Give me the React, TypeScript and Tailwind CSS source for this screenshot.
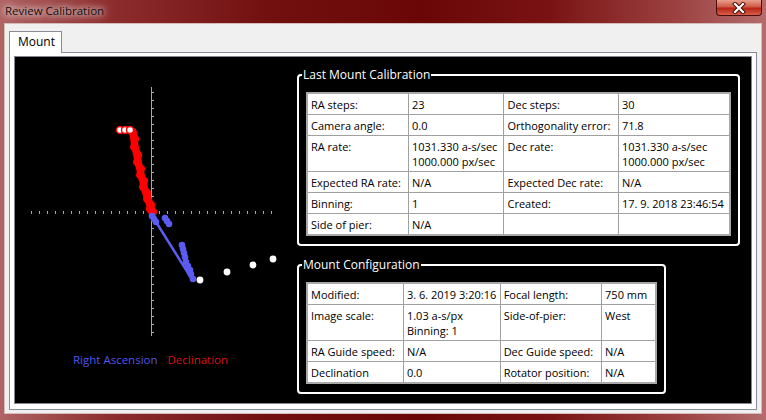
import React from 'react';

type Row = [string, string, string, string];

const calibration: Row[] = [
  ['RA steps:', '23', 'Dec steps:', '30'],
  ['Camera angle:', '0.0', 'Orthogonality error:', '71.8'],
  ['RA rate:', '1031.330 a-s/sec\n1000.000 px/sec', 'Dec rate:', '1031.330 a-s/sec\n1000.000 px/sec'],
  ['Expected RA rate:', 'N/A', 'Expected Dec rate:', 'N/A'],
  ['Binning:', '1', 'Created:', '17. 9. 2018 23:46:54'],
  ['Side of pier:', 'N/A', '', ''],
];

const configuration: Row[] = [
  ['Modified:', '3. 6. 2019 3:20:16', 'Focal length:', '750 mm'],
  ['Image scale:', '1.03 a-s/px\nBinning: 1', 'Side-of-pier:', 'West'],
  ['RA Guide speed:', 'N/A', 'Dec Guide speed:', 'N/A'],
  ['Declination', '0.0', 'Rotator position:', 'N/A'],
];

function InfoTable({ rows, cols }: { rows: Row[]; cols: string[] }) {
  return (
    <table className="border-collapse table-fixed bg-white text-black border-2 border-[#a8a8a8]">
      <colgroup>
        {cols.map((c, i) => (
          <col key={i} className={c} />
        ))}
      </colgroup>
      <tbody>
        {rows.map((row, r) => (
          <tr key={r}>
            {row.map((cell, i) => (
              <td
                key={i}
                className="border border-[#a0a0a0] align-top pl-[3px] pt-[3px] pb-[2px] leading-[15px] whitespace-nowrap overflow-hidden"
              >
                {cell.split('\n').map((line, j) => (
                  <div key={j}>{line}</div>
                ))}
              </td>
            ))}
          </tr>
        ))}
      </tbody>
    </table>
  );
}

function GroupBox({ title, width, children }: { title: string; width: string; children: React.ReactNode }) {
  return (
    <fieldset className={`border-2 border-white rounded-[4px] pt-[9px] px-[7px] pb-[8px] ${width}`}>
      <legend className="text-white leading-[16px] text-[12px] px-[1px] ml-[-4px]">{title}</legend>
      {children}
    </fieldset>
  );
}

// red (dec) trajectory and blue (ra) points, in chart coordinates
const redPath: [number, number][] = [
  [118, 75], [119, 82], [120, 90], [122, 98], [123, 105], [125, 112], [126, 118],
  [128, 124], [129, 130], [131, 136], [133, 142], [135, 148], [136, 152], [137, 155],
];
const bluePts: [number, number][] = [
  [137, 159], [139, 162], [141, 165],
  [150, 161], [152, 164], [154, 167],
  [167, 188], [168, 192], [169, 196], [170, 200],
  [171, 205], [173, 209], [175, 213], [176, 217], [178, 222],
];
const whitePts: [number, number][] = [[185, 223], [212, 215], [238, 208], [258, 202]];

function Chart() {
  const ticks = Array.from({ length: 31 }, (_, i) => i - 15);
  return (
    <svg width={282} height={295} className="block">
      <line x1={136.5} y1={30} x2={136.5} y2={279} stroke="#a8a8a8" strokeWidth={1} />
      {ticks.map((k) => (
        <line key={'v' + k} x1={137} y1={155.5 + k * 8} x2={139} y2={155.5 + k * 8} stroke="#a8a8a8" />
      ))}
      {ticks.map((k) => (
        <line key={'h' + k} x1={136.5 + k * 8} y1={154} x2={136.5 + k * 8} y2={157} stroke="#a8a8a8" />
      ))}
      <polyline
        points={redPath.map((p) => p.join(',')).join(' ')}
        fill="none"
        stroke="#ff0000"
        strokeWidth={7.5}
        strokeLinecap="round"
        strokeLinejoin="round"
      />
      {redPath.map(([x, y], i) => (
        <circle key={'r' + i} cx={x + (i % 2 ? 1 : -0.8)} cy={y} r={4.2} fill="#ff0000" />
      ))}
      {[105, 110, 115].map((x) => (
        <circle key={'o' + x} cx={x} cy={73} r={3.5} fill="#ffffff" stroke="#ff0000" strokeWidth={1.4} />
      ))}
      <line x1={136} y1={157} x2={178} y2={224} stroke="#5c5cf2" strokeWidth={2.5} />
      {bluePts.map(([x, y], i) => (
        <circle key={'b' + i} cx={x} cy={y} r={3.3} fill="#5c5cf2" />
      ))}
      {whitePts.map(([x, y], i) => (
        <circle key={'w' + i} cx={x} cy={y} r={3.4} fill="#ffffff" />
      ))}
    </svg>
  );
}

export default function App() {
  return (
    <div className="w-[766px] h-[420px] flex flex-col overflow-hidden font-['Open_Sans','Liberation_Sans',sans-serif] text-[11px] bg-[linear-gradient(90deg,#b06464_0%,#8c2c2c_15%,#721010_35%,#6a0606_55%,#7a1414_72%,#9c4040_88%,#b46c6c_100%)]">
      <div className="h-[23px] flex items-start justify-between">
        <div className="pl-[5px] pt-[3px] leading-[15px] text-[11.5px] text-[#111] [text-shadow:0_0_6px_#ffffff,0_0_10px_#ffffff]">
          Review Calibration
        </div>
        <div className="mr-[4px] w-[46px] h-[16px] rounded-b-[4px] border border-t-0 border-[#4a0c0c] bg-[linear-gradient(180deg,#e8a090_0%,#d05a44_45%,#b82414_55%,#d8604a_100%)] flex items-center justify-center">
          <svg width={14} height={12} viewBox="0 0 14 12">
            <path d="M3 2 L11 10 M11 2 L3 10" stroke="#3a0a0a" strokeWidth={4} strokeLinecap="square" />
            <path d="M3 2 L11 10 M11 2 L3 10" stroke="#ffffff" strokeWidth={2.2} strokeLinecap="square" />
          </svg>
        </div>
      </div>

      <div className="flex-1 mx-[4px] mb-[6px] bg-[#f0f0f0] border border-[#d4bcbc] pt-[7px] px-[4px] pb-[3px] flex flex-col">
        <div className="flex">
          <div className="relative z-10 -mb-[1px] w-[53px] h-[22px] bg-white border border-b-0 border-[#898c95] pl-[8px] leading-[20px] text-[12px] text-black">
            Mount
          </div>
        </div>
        <div className="flex-1 border border-[#898c95] bg-white pt-[3px] px-[4px] pb-[5px] flex">
          <div className="flex-1 border border-[#828790] bg-black flex">
            <div className="w-[282px] flex flex-col">
              <Chart />
              <div className="pl-[58px] flex gap-[10px] leading-[15px] text-[11.5px]">
                <span className="text-[#5555ee]">Right Ascension</span>
                <span className="text-[#dd1111]">Declination</span>
              </div>
            </div>
            <div className="pt-[10px] flex flex-col gap-[11px]">
              <GroupBox title="Last Mount Calibration" width="w-[443px]">
                <InfoTable rows={calibration} cols={['w-[102px]', 'w-[96px]', 'w-[115px]', 'w-[112px]']} />
              </GroupBox>
              <GroupBox title="Mount Configuration" width="w-[369px]">
                <InfoTable rows={configuration} cols={['w-[97px]', 'w-[97px]', 'w-[102px]', 'w-[55px]']} />
              </GroupBox>
            </div>
          </div>
        </div>
      </div>
    </div>
  );
}
